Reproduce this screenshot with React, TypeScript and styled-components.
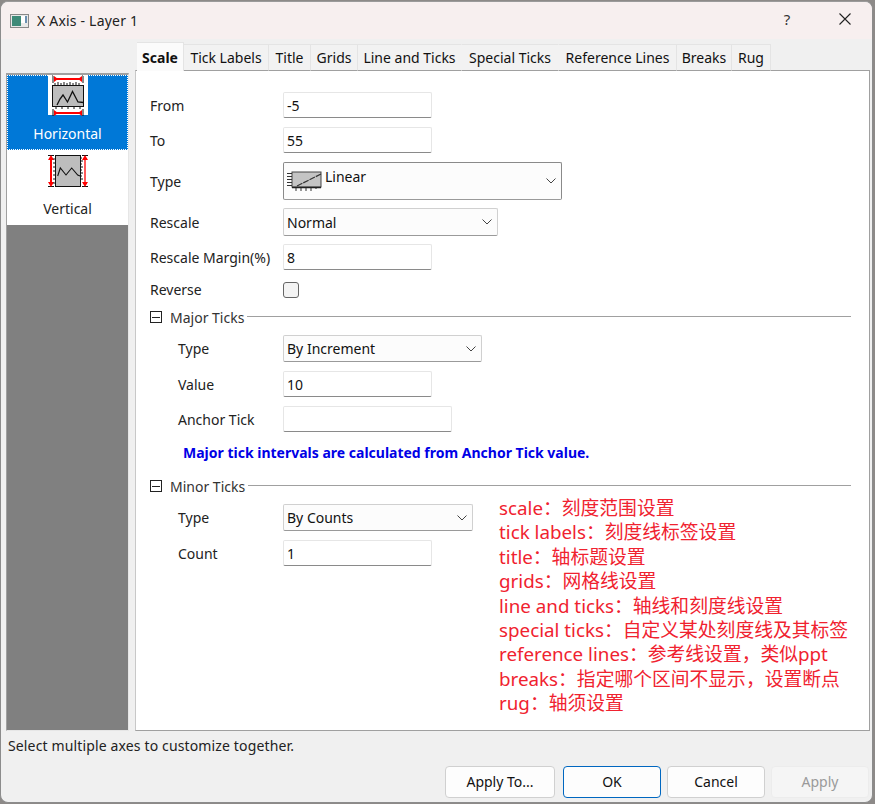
import React from "react";
import styled, { createGlobalStyle } from "styled-components";

const Global = createGlobalStyle`
  html, body { margin: 0; padding: 0; width: 875px; height: 804px; overflow: hidden; background: #8d8a88; }
  * { box-sizing: border-box; }
  body { font-family: "Noto Sans", "Open Sans", "Noto Sans CJK SC", sans-serif; font-size: 14px; color: #111; }
`;

const Window = styled.div`
  width: 873px; height: 802px; margin-top: 1px;
  background: #f0f0f0; border-radius: 8px; overflow: hidden;
  border: 1px solid #8c8c8c; border-top-color: #9a9a9a;
  display: flex; flex-direction: column;
`;
const TitleBar = styled.div`
  height: 37px; flex: none; background: #f7efef;
  display: flex; align-items: center; padding-left: 9px;
`;
const TitleText = styled.div`
  font-size: 14px; margin-left: 8px; flex: 1; color: #222; letter-spacing: .2px;
`;
const HelpGlyph = styled.div`
  width: 14px; text-align: center; font-size: 15px; margin-right: 44px; margin-top: -3px; color: #333;
`;
const CloseBox = styled.div`
  width: 14px; height: 14px; margin-right: 20px; margin-top: -3px; display: flex;
`;
const Body = styled.div`
  flex: 1; display: flex; padding: 4px 2px 0 5px; gap: 6px; min-height: 0;
`;
const ListCol = styled.div`
  width: 123px; flex: none; display: flex; flex-direction: column; padding-top: 30px;
`;
const List = styled.div`
  flex: 1; background: #808080; border: 1px solid #a0a0a0; border-right-color: #e6e6e6; border-bottom-color: #e6e6e6; border-top-width: 2px;
  display: flex; flex-direction: column;
`;
const ListItem = styled.div<{ $active?: boolean }>`
  height: 75px; flex: none; display: flex; flex-direction: column; align-items: center;
  background: ${(p) => (p.$active ? "#0078d7" : "#fff")};
  color: ${(p) => (p.$active ? "#fff" : "#222")};
  outline: ${(p) => (p.$active ? "1px dotted #fff" : "none")};
  outline-offset: -1px;
`;
const ListIcon = styled.div`
  width: 40px; height: 40px; background: #fff; flex: none; display: flex;
`;
const ListLabel = styled.div`
  font-size: 14px; margin-top: 9px; line-height: 20px;
`;
const TabCol = styled.div`
  flex: 1; display: flex; flex-direction: column; min-width: 0;
`;
const TabBar = styled.div`
  height: 28px; flex: none; display: flex; align-items: flex-end; position: relative; z-index: 1; margin-bottom: -1px; padding-left: 2px;
`;
const Tab = styled.div<{ $active?: boolean; $w: number; $plain?: boolean }>`
  width: ${(p) => p.$w}px; height: ${(p) => (p.$active ? 29 : 27)}px;
  display: flex; align-items: center; justify-content: center;
  font-size: 14px; font-weight: ${(p) => (p.$active ? 700 : 400)};
  background: ${(p) => (p.$active ? "#fbfbfb" : "#f2f2f2")};
  border: 1px solid #e4e4e4; border-left: none;
  border-bottom: ${(p) => (p.$active ? "none" : "1px solid #a0a0a0")};
  border-right-color: ${(p) => (p.$plain ? "transparent" : "#e4e4e4")};
  white-space: nowrap; color: #111;
`;
const Panel = styled.div`
  flex: 1; background: #fff; border: 1px solid #a0a0a0; border-left-color: #c8c8c8;
  padding: 21px 18px 0 14px; display: flex; flex-direction: column;
`;
const Row = styled.div<{ $h: number; $mb?: number; $indent?: boolean }>`
  height: ${(p) => p.$h}px; margin-bottom: ${(p) => p.$mb ?? 9}px;
  display: grid; grid-template-columns: ${(p) => (p.$indent ? "105px" : "133px")} 1fr;
  align-items: center; padding-left: ${(p) => (p.$indent ? 28 : 0)}px;
`;
const Label = styled.div`
  color: #222; white-space: nowrap; font-size: 14px;
`;
const Input = styled.div<{ $w?: number }>`
  width: ${(p) => p.$w ?? 149}px; height: 100%;
  background: #fff; border: 1px solid #e6e6e6; border-bottom: 1px solid #8a8a8a; border-radius: 2px;
  display: flex; align-items: center; padding-left: 3px; font-size: 14px; color: #111;
`;
const Select = styled.div<{ $w: number; $dark?: boolean }>`
  width: ${(p) => p.$w}px; height: 100%;
  background: #fcfcfc; border: 1px solid ${(p) => (p.$dark ? "#8a8a8a" : "#d0d0d0")}; border-bottom-color: #9a9a9a; border-radius: 2px;
  display: flex; align-items: center; padding: 0 5px 0 3px; font-size: 14px; color: #111;
  justify-content: space-between;
`;
const SelectValue = styled.div`
  display: flex; align-items: flex-start; gap: 3px; line-height: 20px;
  & > span { margin-top: -4px; }
`;
const Checkbox = styled.div`
  width: 16px; height: 16px; background: #f4f4f4; border: 1px solid #666; border-radius: 3px;
`;
const GroupHeader = styled.div<{ $mb: number }>`
  display: flex; align-items: center; height: 20px; margin-bottom: ${(p) => p.$mb}px;
`;
const Toggle = styled.div`
  width: 12px; height: 12px; border: 1px solid #222; flex: none; display: flex; align-items: center; justify-content: center;
  &::after { content: ""; width: 8px; height: 1px; background: #222; }
`;
const GroupTitle = styled.div`
  margin-left: 8px; color: #333; white-space: nowrap; font-size: 14px;
`;
const GroupRule = styled.div`
  flex: 1; height: 1px; background: #a0a0a0; margin-left: 3px; margin-top: -2px;
`;
const Note = styled.div`
  font-weight: 700; color: #0000e6; font-size: 14px; padding-left: 33px; height: 20px; line-height: 20px; margin-bottom: 13px; white-space: nowrap;
`;
const MinorArea = styled.div`
  display: flex;
`;
const MinorForm = styled.div`
  width: 349px; flex: none;
`;
const Notes = styled.div`
  color: #f0222f; font-size: 18.8px; line-height: 24.4px; white-space: nowrap; margin-top: -8px;
  font-family: "Noto Sans", "Noto Sans CJK SC", sans-serif;
`;
const Status = styled.div`
  height: 35px; flex: none; font-size: 14px; letter-spacing: .14px; line-height: 30px; padding-left: 7px; color: #222;
`;
const Footer = styled.div`
  height: 36px; flex: none; display: flex; justify-content: flex-end; gap: 6px; padding-right: 3px;
`;
const Btn = styled.div<{ $w: number; $primary?: boolean; $off?: boolean; $sep?: boolean }>`
  width: ${(p) => p.$w}px; height: 32px; border-radius: 4px; display: flex; align-items: center; justify-content: center;
  font-size: 14px; margin-right: ${(p) => (p.$sep ? 2 : 0)}px; padding-bottom: 2px;
  background: ${(p) => (p.$off ? "#f5f5f5" : "#fdfdfd")};
  color: ${(p) => (p.$off ? "#9a9a9a" : "#111")};
  border: 1px solid ${(p) => (p.$primary ? "#0067c0" : p.$off ? "#ececec" : "#d0d0d0")};
`;

const HorizontalIcon = () => (
  <svg width="40" height="41" viewBox="0 0 40 41">
    <path d="M5 0v8M35 0v8M5 34v7M35 34v7" stroke="#111" strokeWidth="1" />
    <path d="M7 4h26M7 38h26" stroke="#f00" strokeWidth="1.8" />
    <path d="M10 4l-4-3v6zM30 4l4-3v6zM10 38l-4-3v6zM30 38l4-3v6z" fill="#f00" />
    <rect x="4.5" y="10.5" width="31" height="21" fill="#bdbdbd" stroke="#111" />
    <path d="M7 10V8M10 10V7M13 10V8M16 10V7M19 10V8M22 10V7M25 10V8M28 10V7M31 10V8M8 34v-2M14 34v-2M20 34v-2M26 34v-2M32 34v-2" stroke="#111" />
    <path d="M9 30l3-6 3-4 4.500 7 5-10.500 5.500 10.500 5.500 0.500" fill="none" stroke="#111" strokeWidth="1.3" />
  </svg>
);
const VerticalIcon = () => (
  <svg width="40" height="40" viewBox="0 0 40 40">
    <path d="M0 5.500h6M34 5.500h6M0 36.500h6M34 36.500h6" stroke="#111" />
    <path d="M3 7v28" stroke="#f00" strokeWidth="2" />
    <path d="M37 7v28" stroke="#f00" strokeWidth="1.3" />
    <path d="M3 5l-3 5h6zM3 37l-3-5h6zM37 5l-3 5h6zM37 37l-3-5h6z" fill="#f00" />
    <rect x="7.500" y="5.500" width="25" height="31" fill="#bdbdbd" stroke="#111" />
    <path d="M5 9h2M5 13h2M5 17h2M5 21h2M5 25h2M5 29h2M5 33h2M33 8h1M33 11h2M33 14h1M33 17h2M33 20h1M33 23h2M33 26h1M33 29h2" stroke="#111" />
    <path d="M9.700 26l2.600-8 5.700 7 5.700-7 6 7 2.300 1" fill="none" stroke="#111" strokeWidth="1.1" />
  </svg>
);
const LinearIcon = () => (
  <svg width="35" height="21" viewBox="0 0 35 21">
    <rect x="5" y="1" width="29" height="15" fill="#c4c4c4" stroke="#444" />
    <path d="M0 2.500h5M0 5.500h5M0 8.500h5M0 11.500h5M0 14.500h5M9 16v4M14 16v4M19 16v4M24 16v4M29 16v2" stroke="#333" />
    <path d="M10 15L34 3" stroke="#333" strokeWidth="1.2" strokeDasharray="6 1" />
    <path d="M5 16.500h29" stroke="#222" strokeWidth="1.6" />
  </svg>
);
const Chevron = () => (
  <svg width="10" height="6" viewBox="0 0 10 6"><path d="M.5.5L5 5l4.500-4.500" fill="none" stroke="#444" /></svg>
);
const AppIcon = () => (
  <svg width="19" height="16" viewBox="0 0 19 16">
    <rect x=".5" y="1.500" width="18" height="13" fill="#e8e8e8" stroke="#888" />
    <rect x="2" y="3" width="9" height="10" fill="#3d8a78" />
    <rect x="11" y="3" width="4" height="7" fill="#fff" />
    <rect x="15" y="3" width="2" height="7" fill="#6a8fb0" />
  </svg>
);

const tabs: [string, number, boolean?][] = [
  ["Tick Labels", 85], ["Title", 42], ["Grids", 47],
  ["Line and Ticks", 104, true], ["Special Ticks", 97, true], ["Reference Lines", 118], ["Breaks", 55], ["Rug", 39],
];
const notes = [
  "scale：刻度范围设置",
  "tick labels：刻度线标签设置",
  "title：轴标题设置",
  "grids：网格线设置",
  "line and ticks：轴线和刻度线设置",
  "special ticks：自定义某处刻度线及其标签",
  "reference lines：参考线设置，类似ppt",
  "breaks：指定哪个区间不显示，设置断点",
  "rug：轴须设置",
];

export default function App() {
  return (
    <>
      <Global />
      <Window>
        <TitleBar>
          <AppIcon />
          <TitleText>X Axis - Layer 1</TitleText>
          <HelpGlyph>?</HelpGlyph>
          <CloseBox>
            <svg width="14" height="14" viewBox="0 0 14 14"><path d="M1.500 1.500l11 11M12.500 1.500l-11 11" stroke="#222" strokeWidth="1.1" /></svg>
          </CloseBox>
        </TitleBar>
        <Body>
          <ListCol>
            <List>
              <ListItem $active>
                <ListIcon><HorizontalIcon /></ListIcon>
                <ListLabel>Horizontal</ListLabel>
              </ListItem>
              <ListItem>
                <ListIcon><VerticalIcon /></ListIcon>
                <ListLabel>Vertical</ListLabel>
              </ListItem>
            </List>
          </ListCol>
          <TabCol>
            <TabBar>
              <Tab $active $w={47}>Scale</Tab>
              {tabs.map(([t, w, plain]) => <Tab key={t} $w={w} $plain={plain}>{t}</Tab>)}
            </TabBar>
            <Panel>
              <Row $h={26}><Label>From</Label><Input>-5</Input></Row>
              <Row $h={26}><Label>To</Label><Input>55</Input></Row>
              <Row $h={38} $mb={8}>
                <Label>Type</Label>
                <Select $w={279} $dark>
                  <SelectValue><LinearIcon /><span>Linear</span></SelectValue>
                  <Chevron />
                </Select>
              </Row>
              <Row $h={28} $mb={8}><Label>Rescale</Label><Select $w={215}>Normal<Chevron /></Select></Row>
              <Row $h={26} $mb={10}><Label>Rescale Margin(%)</Label><Input>8</Input></Row>
              <Row $h={16} $mb={11}><Label>Reverse</Label><Checkbox /></Row>
              <GroupHeader $mb={8}><Toggle /><GroupTitle>Major Ticks</GroupTitle><GroupRule /></GroupHeader>
              <Row $h={27} $indent><Label>Type</Label><Select $w={199}>By Increment<Chevron /></Select></Row>
              <Row $h={26} $indent><Label>Value</Label><Input>10</Input></Row>
              <Row $h={26} $mb={11} $indent><Label>Anchor Tick</Label><Input $w={169} /></Row>
              <Note>Major tick intervals are calculated from Anchor Tick value.</Note>
              <GroupHeader $mb={8}><Toggle /><GroupTitle>Minor Ticks</GroupTitle><GroupRule /></GroupHeader>
              <MinorArea>
                <MinorForm>
                  <Row $h={27} $indent><Label>Type</Label><Select $w={190}>By Counts<Chevron /></Select></Row>
                  <Row $h={26} $indent><Label>Count</Label><Input>1</Input></Row>
                </MinorForm>
                <Notes>{notes.map((n) => <div key={n}>{n}</div>)}</Notes>
              </MinorArea>
            </Panel>
          </TabCol>
        </Body>
        <Status>Select multiple axes to customize together.</Status>
        <Footer>
          <Btn $w={110} $sep>Apply To...</Btn>
          <Btn $w={98} $primary>OK</Btn>
          <Btn $w={98}>Cancel</Btn>
          <Btn $w={98} $off>Apply</Btn>
        </Footer>
      </Window>
    </>
  );
}
